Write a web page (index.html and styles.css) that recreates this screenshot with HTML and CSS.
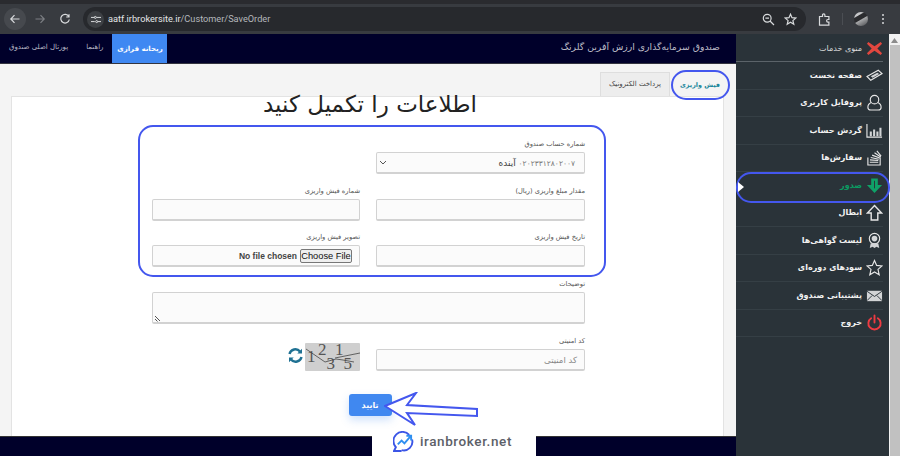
FILE: index.html
```html
<!DOCTYPE html>
<html lang="fa">
<head>
<meta charset="utf-8">
<title>SaveOrder</title>
<link rel="stylesheet" href="styles.css">
</head>
<body>
<div class="chrome">
  <div class="nav-btn back"><svg width="12" height="12" viewBox="0 0 12 12"><path d="M10.5 6H2M5.5 2.2 1.8 6l3.7 3.8" class="ic-light"/></svg></div>
  <div class="nav-btn"><svg width="12" height="12" viewBox="0 0 12 12"><path d="M1.5 6H10M6.5 2.2 10.2 6l-3.700 3.800" class="ic-dim"/></svg></div>
  <div class="nav-btn"><svg width="12" height="12" viewBox="0 0 12 12"><path d="M9.800 3.600A4.300 4.300 0 1 0 10.300 6.500M10 1.200v2.800H7.200" class="ic-light"/></svg></div>
  <div class="omni">
    <div class="site-btn"><svg width="12" height="10" viewBox="0 0 12 10"><path d="M0 2.500h4M8 7.500h4M6.500 2.500H12M0 7.500h4.500" class="ic-light"/><circle cx="5.200" cy="2.500" r="1.200" class="ic-light"/><circle cx="6.800" cy="7.500" r="1.200" class="ic-light"/></svg></div>
    <div class="url"><span class="url-host">aatf.irbrokersite.ir</span>/Customer/SaveOrder</div>
    <svg class="omni-ic" width="13" height="13" viewBox="0 0 13 13"><circle cx="5.200" cy="5.200" r="3.900" class="ic-light"/><path d="M8 8l4 4M3.400 5.200h3.600" class="ic-light"/></svg>
    <svg class="omni-ic" width="13" height="13" viewBox="0 0 13 13"><path d="M6.500 1.200 8 4.700l3.800.4-2.900 2.500.9 3.700-3.300-2-3.300 2 .9-3.700L1.200 5.100 5 4.700z" class="ic-light"/></svg>
  </div>
  <svg class="ext" width="13" height="13" viewBox="0 0 13 13"><path d="M1.500 3.500h3V2a1.200 1.200 0 0 1 2.400 0v1.500h4v3h-1a1.300 1.300 0 0 0 0 2.600h1v3h-9.400z" class="ic-light"/></svg>
  <div class="chrome-sep"></div>
  <div class="avatar"></div>
  <div class="dots"><span></span><span></span><span></span></div>
</div>

<div class="app">
  <div class="main">
    <header class="topbar">
      <div class="top-links">
        <a class="top-link">پورتال اصلی صندوق</a>
        <a class="top-link">راهنما</a>
        <a class="top-link active">ریحانه فرازی</a>
      </div>
      <div class="brand">صندوق سرمایه‌گذاری ارزش آفرین گلرنگ</div>
    </header>
    <div class="content">
      <div class="tabs">
        <div class="tab tab-active">فیش واریزی</div>
        <div class="tab">پرداخت الکترونیک</div>
      </div>
      <div class="card">
        <h1 class="title">اطلاعات را تکمیل کنید</h1>
        <form class="form">
          <div class="field">
            <label>شماره حساب صندوق</label>
            <div class="control select"><span class="select-text"><span class="digits">۰۲۰۲۳۳۱۲۸۰۲۰۰۷</span> آینده</span><svg width="8" height="5" viewBox="0 0 8 5"><path d="M1 1l3 3 3-3" class="ic-chev"/></svg></div>
          </div>
          <div class="field"></div>
          <div class="field">
            <label>مقدار مبلغ واریزی (ریال)</label>
            <div class="control"></div>
          </div>
          <div class="field">
            <label>شماره فیش واریزی</label>
            <div class="control"></div>
          </div>
          <div class="field">
            <label>تاریخ فیش واریزی</label>
            <div class="control"></div>
          </div>
          <div class="field">
            <label>تصویر فیش واریزی</label>
            <div class="control file"><span class="choose">Choose File</span><span class="nofile">No file chosen</span></div>
          </div>
          <div class="field wide">
            <label>توضیحات</label>
            <div class="control area"><svg class="grip" width="7" height="7" viewBox="0 0 7 7"><path d="M1 1l5 5M1 4l2.500 2.500" class="ic-chev"/></svg></div>
          </div>
          <div class="field">
            <label>کد امنیتی</label>
            <div class="control ph">کد امنیتی</div>
          </div>
          <div class="captcha-cell">
            <div class="captcha">
              <svg width="55" height="28" viewBox="0 0 55 28"><path d="M1 6 20 19 31 16 38 17M30 15 55 10M38 17l11 2" class="ic-cap"/></svg>
              <span class="cap-d d1">1</span><span class="cap-d d2">2</span><span class="cap-d d3">3</span><span class="cap-d d4">1</span><span class="cap-d d5">5</span>
            </div>
            <svg class="refresh" width="15" height="15" viewBox="0 0 15 15"><path d="M1.500 6A6 6 0 0 1 12 3.500M13.500 9A6 6 0 0 1 3 11.500" class="ic-ref"/><path d="M14 .8v4.700H9.300zM1 14.200V9.500h4.700z" class="ic-ref-fill"/></svg>
          </div>
        </form>
        <div class="actions"><button type="button" class="submit">تایید</button></div>
      </div>
    </div>
    <div class="footer"></div>
  </div>

  <aside class="sidebar">
    <div class="side-row head"><span>منوی خدمات</span>
      <svg viewBox="0 0 18 18"><path d="M2.500 2 9 6.500 15.500 2 17 4l-5 5 5 5-1.500 2L9 11.500 2.500 16 1 14l5-5-5-5z" class="s-x"/></svg></div>
    <div class="side-row"><span>صفحه نخست</span>
      <svg viewBox="0 0 18 18"><path d="M1 10 13 3.500l4 3.500L5 14z" class="s-line"/><path d="M5 9.800 12 6l2 1.500-7 3.800z" class="s-fill"/></svg></div>
    <div class="side-row"><span>پروفایل کاربری</span>
      <svg viewBox="0 0 18 18"><circle cx="9" cy="6" r="4.500" class="s-line"/><path d="M5.500 9C3 10 2 12 2 14c0 2 1 3 3 3h8c2 0 3-1 3-3 0-2-1-4-3.500-5" class="s-line"/></svg></div>
    <div class="side-row"><span>گردش حساب</span>
      <svg viewBox="0 0 18 18"><path d="M1 2v14h16" class="s-line"/><path d="M4 10h2.200v5H4zM7.500 8h2.200v7H7.500zM11 10h2.200v5H11zM14.200 6h2.200v9h-2.200z" class="s-fill"/></svg></div>
    <div class="side-row"><span>سفارش‌ها</span>
      <svg viewBox="0 0 18 18"><path d="M2 9v8h13V9M4 14h9M4.200 11.500l8.800.7M5 9l8.500 1.800M6.500 6.500l8 3M9 4l6.500 4.500M11.500 2 16 7.500" class="s-line"/></svg></div>
    <div class="side-row current"><span>صدور</span>
      <svg viewBox="0 0 18 18"><path d="M5.500 1.500h7v7h4.500L9 17 1 8.500h4.500z" class="s-green"/><path d="M9 4v8" class="s-dark"/></svg></div>
    <div class="side-row"><span>ابطال</span>
      <svg viewBox="0 0 18 18"><path d="M9 1.500 16.500 9.500h-4V17h-7V9.500h-4z" class="s-line s-thick"/></svg></div>
    <div class="side-row"><span>لیست گواهی‌ها</span>
      <svg viewBox="0 0 18 18"><circle cx="9" cy="7" r="5.500" class="s-line"/><circle cx="9" cy="7" r="3" class="s-fill"/><path d="M5 12l-1 5 3-1.500L9 17l2-1.500 3 1.500-1-5z" class="s-fill"/></svg></div>
    <div class="side-row"><span>سودهای دوره‌ای</span>
      <svg viewBox="0 0 18 18"><path d="M9 1.500 11.300 6.800 17 7.300 12.700 11l1.300 5.700L9 13.700 4 16.700 5.300 11 1 7.300 6.700 6.800z" class="s-line"/></svg></div>
    <div class="side-row"><span>پشتیبانی صندوق</span>
      <svg viewBox="0 0 18 18"><path d="M1 4h16v11H1z" class="s-fill"/><path d="M1 4.500 9 10l8-5.500M1 14.500 6.500 9M17 14.500 11.500 9" class="s-dark"/></svg></div>
    <div class="side-row"><span>خروج</span>
      <svg viewBox="0 0 18 18"><path d="M5.500 4.500a6.500 6.500 0 1 0 7 0M9 1.500V9" class="s-red"/></svg></div>
  </aside>

  <div class="scrollbar">
    <svg width="7" height="5" viewBox="0 0 7 5"><path d="M3.500 0 7 5H0z" class="s-arrow"/></svg>
    <div class="thumb"></div>
  </div>
</div>

<div class="ring ring-tab"></div>
<div class="ring ring-form"></div>
<div class="ring ring-side"></div>
<div class="caret"></div>
<svg class="arrow" width="95" height="35" viewBox="0 0 95 35"><path d="M1 14 32 1 23 13 93 17V24L23 21 31 33z" class="arrow-path"/></svg>
<div class="watermark">
  <svg width="21" height="21" viewBox="0 0 22 22"><path d="M17 4A9 9 0 0 0 3 17l-2 4h8" class="wm-a"/><path d="M20 9A9 9 0 0 1 9 20" class="wm-a"/><path d="M5 14l4-4 3 3 6-7M14 5h5v5" class="wm-b"/></svg>
  <span>iranbroker.net</span>
</div>
</body>
</html>
```
FILE: styles.css
```css
* { box-sizing: border-box; }
html, body { margin: 0; padding: 0; }
body {
  width: 900px;
  height: 456px;
  overflow: hidden;
  position: relative;
  font-family: "DejaVu Sans", "Noto Sans", sans-serif;
  background: #fff;
}

/* browser chrome */
.chrome {
  height: 34px;
  background: #383b40;
  border-top: 4px solid #2a2b2f;
  display: flex;
  align-items: center;
  padding-left: 4px;
}
.nav-btn {
  width: 22px;
  height: 22px;
  margin-right: 3px;
  border-radius: 50%;
  display: flex;
  align-items: center;
  justify-content: center;
}
.back { background: #46494e; }
.omni {
  margin-left: 4px;
  width: 723px;
  height: 24px;
  border-radius: 12px;
  background: #27292d;
  display: flex;
  align-items: center;
  padding: 0 9px 0 4px;
}
.site-btn {
  width: 17px;
  height: 17px;
  border-radius: 50%;
  background: #3d4044;
  display: flex;
  align-items: center;
  justify-content: center;
}
.site-btn svg { width: 10px; height: 9px; }
.url {
  margin-left: 4px;
  flex: 1;
  font: 9.200px/1 "Roboto", "Liberation Sans", sans-serif;
  color: #b4b7bb;
}
.url-host { color: #e4e6e8; }
.omni-ic { margin-left: 9px; }
.ext { margin-left: 12px; }
.chrome-sep { width: 1px; height: 12px; background: #4b4e53; margin-left: 11px; }
.avatar {
  width: 14px;
  height: 14px;
  margin-left: 11px;
  border-radius: 50%;
  background: linear-gradient(150deg, #c5c6c8 25%, #2a2b2e 30%, #2a2b2e 50%, #a5a6a8 55%, #5c5d60 90%);
}
.dots { margin-left: 14px; display: flex; flex-direction: column; gap: 2px; }
.dots span { width: 2px; height: 2px; border-radius: 50%; background: #d6d8da; }
.ic-light, .ic-dim { fill: none; stroke: #d8dadc; stroke-width: 1.200; }
.ic-dim { stroke: #7c7f83; }

/* app */
.app { display: flex; height: 422px; }
.main { width: 736px; display: flex; flex-direction: column; background: #f4f4f4; }
.topbar {
  height: 30px;
  flex: none;
  background: #00002a;
  border-bottom: 1px solid #33343f;
  display: flex;
  justify-content: space-between;
  align-items: center;
}
.top-links { display: flex; height: 100%; align-items: stretch; }
.top-link {
  font-size: 7px;
  color: #b9bac6;
  padding: 0 9px 3px;
  display: flex;
  align-items: center;
}
.top-link.active {
  background: #3f88f2;
  color: #fff;
  width: 55px;
  justify-content: center;
  padding: 0;
  font-weight: 700;
}
.brand { color: #bdbdc8; font-size: 9.300px; margin-right: 16px; padding-bottom: 4px; }

.content { flex: 1; padding: 8px 11px 0 11px; min-height: 0; }
.tabs { display: flex; flex-direction: row-reverse; height: 24px; margin-right: -5px; }
.tab {
  width: 70px;
  display: flex;
  align-items: center;
  justify-content: center;
  font-size: 7px;
  color: #444;
  background: #ededed;
  border: 1px solid #dedede;
  border-bottom: 0;
  white-space: nowrap;
  padding-bottom: 1px;
}
.tab-active {
  width: 60px;
  background: #f4f4f4;
  color: #17859a;
  border: 0;
  font-size: 6.400px;
  font-weight: 700;
  padding-top: 2px;
}
.card {
  width: 713px;
  height: 340px;
  background: #fff;
  border: 1px solid #e3e3e3;
  border-bottom: 0;
  display: flex;
  flex-direction: column;
  align-items: center;
}
.title {
  margin: -7px 0 0 5px;
  height: 28px;
  font-size: 23px;
  line-height: 28px;
  font-weight: 400;
  color: #222;
}
.form {
  direction: rtl;
  width: 433px;
  margin: 13.500px 0 0 2px;
  display: grid;
  grid-template-columns: 209px 208px;
  column-gap: 16px;
  grid-auto-rows: min-content;
}
.field { height: 46.500px; display: flex; flex-direction: column; justify-content: flex-end; padding-bottom: 4px; }
.field label {
  font-size: 6.700px;
  line-height: 9px;
  height: 12px;
  color: #555;
  flex: none;
}
.control {
  height: 22px;
  flex: none;
  background: #fbfbfb;
  border: 1px solid #d2d2d2;
  border-bottom-width: 2px;
  border-radius: 2px;
}
.select {
  display: flex;
  align-items: center;
  justify-content: space-between;
  padding: 0 9px 0 2px;
  font-size: 9px;
  color: #444;
}
.digits { letter-spacing: 1px; font-size: 7.500px; color: #777; }
.file {
  display: flex;
  align-items: center;
  padding-right: 7px;
  gap: 3px;
  font: 700 8.500px "Liberation Sans", sans-serif;
  color: #444;
}
.choose {
  font: 9.300px/12px "Liberation Sans", sans-serif;
  color: #111;
  background: #efefef;
  border: 1px solid #777;
  border-radius: 2px;
  padding: 0;
  height: 14px;
  margin-top: 1px;
  width: 52px;
  text-align: center;
  white-space: nowrap;
  direction: ltr;
}
.nofile { direction: ltr; }
.wide { grid-column: 1 / 3; height: 57px; padding: 9px 0 0; justify-content: flex-start; }
.area { height: 32px; position: relative; }
.grip { position: absolute; left: 1px; bottom: 0; }
.ph { font-size: 8.500px; color: #888; padding: 5px 7px 0; }
.captcha-cell {
  display: flex;
  align-items: flex-end;
  gap: 2px;
  height: 46.500px;
  padding-bottom: 3.500px;
}
.captcha {
  width: 55px;
  height: 28px;
  padding-left: 2px;
  background: #cfcfcf;
  border-radius: 1px;
  position: relative;
  direction: ltr;
  display: flex;
  align-items: flex-start;
}
.captcha svg { position: absolute; left: 0; top: 0; }
.cap-d { flex: none; width: 8.500px; font: 17px/14px "Liberation Serif", serif; color: #555; }
.d1 { align-self: center; margin-right: 2.500px; }
.d3, .d5 { align-self: flex-end; }
.ic-cap { fill: none; stroke: #444; stroke-width: .8; }
.refresh { margin-bottom: 8px; }
.ic-ref { fill: none; stroke: #1f7193; stroke-width: 2.400; }
.ic-ref-fill { fill: #1f7193; }
.ic-chev { fill: none; stroke: #555; stroke-width: 1; }
.actions { margin-top: 19.500px; margin-left: 5px; }
.submit {
  display: block;
  width: 43px;
  height: 22px;
  border: 0;
  border-radius: 3px;
  background: #4088f0;
  color: #fff;
  font: 700 8px "DejaVu Sans", sans-serif;
  box-shadow: 0 4px 8px rgba(64, 136, 240, .25);
  padding: 0;
}
.footer { height: 20px; flex: none; background: #00002a; border-top: 1px solid #333; }

/* sidebar */
.sidebar { width: 153px; background: #2a3339; padding: 1px 6px 0 0; }
.side-row {
  height: 27.500px;
  display: flex;
  justify-content: flex-end;
  align-items: center;
  gap: 4px;
  border-bottom: 1px solid #353f45;
  color: #f2f2f2;
  font-size: 8px;
  font-weight: 700;
}
.side-row span { white-space: nowrap; }
.side-row svg { width: 17px; height: 17px; flex: none; }
.head { border-bottom-color: #5b6369; color: #dcdcdc; font-weight: 400; height: 27px; }
.current { color: #0b9b62; border-bottom-color: transparent; }
.s-x { fill: #e2473f; }
.s-line { fill: none; stroke: #e6e6e6; stroke-width: 1.200; }
.s-thick { stroke-width: 1.500; }
.s-fill { fill: #d2d4d6; }
.s-green { fill: #0fa268; }
.s-dark { fill: none; stroke: #2a3339; stroke-width: 1; }
.s-red { fill: none; stroke: #ee3b42; stroke-width: 2; stroke-linecap: round; }

.scrollbar { width: 11px; background: #f1f1f1; display: flex; flex-direction: column; align-items: center; }
.scrollbar svg { margin: 4px 0 2px; }
.s-arrow { fill: #8b8b8b; }
.thumb { flex: 1; width: 10px; background: #c1c1c1; }

/* annotations over the page */
.ring { position: absolute; border: 2px solid #4457ee; }
.ring-tab { left: 671px; top: 70px; width: 59px; height: 30px; border-radius: 15px; }
.ring-form { left: 138px; top: 125px; width: 468px; height: 152px; border-radius: 15px; }
.ring-side { left: 736px; top: 172px; width: 154px; height: 31px; border-radius: 15px; }
.caret {
  position: absolute;
  left: 738px;
  top: 182px;
  border-left: 6px solid #fff;
  border-top: 5px solid transparent;
  border-bottom: 5px solid transparent;
}
.arrow { position: absolute; left: 384px; top: 392px; }
.arrow-path { fill: #fff; stroke: #4457ee; stroke-width: 2; }
.watermark {
  position: absolute;
  left: 372px;
  top: 430px;
  width: 164px;
  height: 26px;
  padding: 0 0 4px 21px;
  background: #fff;
  display: flex;
  align-items: center;
  gap: 6px;
  font: 500 13.500px "Roboto", "Liberation Sans", sans-serif;
  letter-spacing: .6px;
  color: #5c6068;
}
.wm-a { fill: none; stroke: #3b55e6; stroke-width: 2; }
.wm-b { fill: none; stroke: #2f8ff0; stroke-width: 2; }
```
